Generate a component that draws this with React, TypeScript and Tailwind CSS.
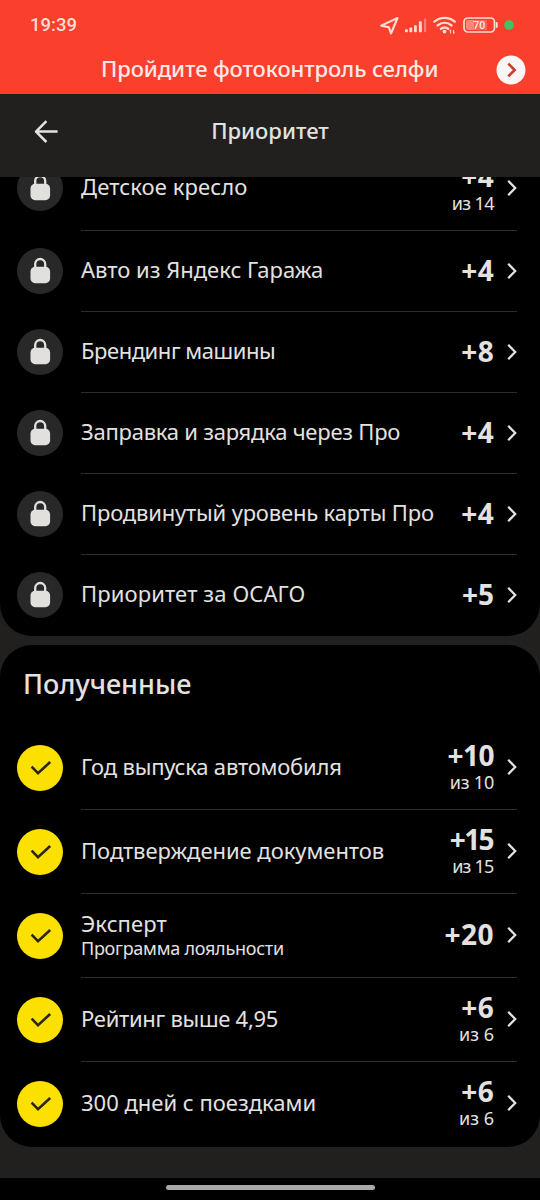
import { clsx } from "clsx";

type Item = {
  title: string;
  titleClass?: string;
  note?: string;
  score: string;
  scoreClass?: string;
  outOf?: string;
  outOfClass?: string;
};

const LOCKED: Item[] = [
  {
    title: "Детское кресло",
    titleClass: "tracking-[0.1px]",
    score: "+4",
    scoreClass: "tracking-[0.3px]",
    outOf: "из 14",
    outOfClass: "tracking-[-0.6px]",
  },
  { title: "Авто из Яндекс Гаража", score: "+4", scoreClass: "tracking-[0.3px]" },
  {
    title: "Брендинг машины",
    titleClass: "tracking-[-0.45px]",
    score: "+8",
    scoreClass: "tracking-[0.3px]",
  },
  {
    title: "Заправка и зарядка через Про",
    titleClass: "tracking-[-0.24px]",
    score: "+4",
    scoreClass: "tracking-[0.3px]",
  },
  {
    title: "Продвинутый уровень карты Про",
    titleClass: "tracking-[-0.18px]",
    score: "+4",
    scoreClass: "tracking-[0.3px]",
  },
  { title: "Приоритет за ОСАГО", titleClass: "tracking-[0.12px]", score: "+5" },
];

const RECEIVED: Item[] = [
  {
    title: "Год выпуска автомобиля",
    titleClass: "tracking-[-0.2px]",
    score: "+10",
    scoreClass: "tracking-[-0.5px]",
    outOf: "из 10",
    outOfClass: "tracking-[-0.2px]",
  },
  {
    title: "Подтверждение документов",
    titleClass: "tracking-[-0.04px]",
    score: "+15",
    scoreClass: "tracking-[-1.6px] mr-[1px]",
    outOf: "из 15",
    outOfClass: "tracking-[-0.8px] mr-[0.6px]",
  },
  {
    title: "Эксперт",
    titleClass: "tracking-[0.1px]",
    note: "Программа лояльности",
    score: "+20",
    scoreClass: "tracking-[0.5px]",
  },
  {
    title: "Рейтинг выше 4,95",
    titleClass: "tracking-[-0.28px]",
    score: "+6",
    scoreClass: "tracking-[0.3px]",
    outOf: "из 6",
  },
  {
    title: "300 дней с поездками",
    score: "+6",
    scoreClass: "tracking-[0.3px]",
    outOf: "из 6",
  },
];

function StatusIcons() {
  return (
    <svg width="136" height="24" viewBox="378 13 136 24" fill="none">
      {/* Location arrow */}
      <path
        d="M397.5 18 381.2 25.6l7.6 1.6 2.2 6.3L397.5 18Z"
        stroke="#ffdcd6"
        strokeWidth="2.1"
        strokeLinejoin="round"
      />
      {/* Signal bars */}
      <g fill="#ffdcd6">
        <rect x="405" y="29.3" width="2.8" height="3" rx="0.8" />
        <rect x="409.4" y="27.5" width="2.8" height="4.8" rx="0.8" />
        <rect x="414" y="25.2" width="2.8" height="7.1" rx="0.8" />
        <rect x="418.9" y="21.3" width="2.9" height="11" rx="0.8" />
        <rect x="424" y="18.5" width="2.2" height="13.8" rx="0.8" opacity="0.4" />
      </g>
      {/* Wi-Fi */}
      <g stroke="#ffdcd6" strokeWidth="2.4" strokeLinecap="round">
        <path d="M434.4 21.6c6.2-5 14.2-5 20.4 0" />
        <path d="M437.7 25.4c4.2-3.4 9.6-3.4 13.8 0" />
        <path d="M441 28.8c2.3-1.8 4.9-1.8 7.2 0" />
      </g>
      <circle cx="444.5" cy="31.6" r="1.9" fill="#ffdcd6" />
      <path d="M450.6 33.5v-3.6m-1 1.2 1-1.2M453.6 30v3.6m1-1.2-1 1.2" stroke="#ffdcd6" strokeWidth="1" />
      {/* Battery */}
      <rect x="464" y="18" width="30.5" height="14" rx="4" stroke="#ffdcd6" strokeWidth="1.7" />
      <path d="M468 20h6v10h-6a2 2 0 0 1-2-2v-6a2 2 0 0 1 2-2Z" fill="#ff8577" />
      <path d="M474 20h13v10h-13z" fill="#fb6354" />
      <path d="M496.8 23v4" stroke="#ffdcd6" strokeWidth="1.8" strokeLinecap="round" />
      <text
        x="479.3"
        y="29"
        textAnchor="middle"
        fill="#ffe9e6"
        fontSize="10.5"
        fontWeight="500"
        fontFamily="Roboto, sans-serif"
      >
        70
      </text>
      <circle cx="509" cy="25" r="4.8" fill="#40c463" />
    </svg>
  );
}

function LockBadge() {
  return (
    <svg width="46" height="46" viewBox="0 0 46 46" fill="none" className="shrink-0">
      <circle cx="23" cy="23" r="23" fill="#282828" />
      <path d="M18.2 20v-4a5 5 0 0 1 10 0v4" stroke="#e2e0dd" strokeWidth="2.3" />
      <rect x="13.5" y="18.8" width="19.6" height="16.4" rx="4.6" fill="#e2e0dd" />
    </svg>
  );
}

function CheckBadge() {
  return (
    <svg width="46" height="46" viewBox="0 0 46 46" fill="none" className="shrink-0">
      <circle cx="23" cy="23" r="23" fill="#fce000" />
      <path d="m14.6 21.6 6.4 6.6 12.2-11.2" stroke="#2b2811" strokeWidth="2.6" />
    </svg>
  );
}

function Chevron() {
  return (
    <svg width="10" height="18" viewBox="0 0 10 18" fill="none" className="shrink-0">
      <path d="m1.2 1.8 7 7.2-7 7.2" stroke="#e4e2e0" strokeWidth="2.3" />
    </svg>
  );
}

function Row({ item, locked, last }: { item: Item; locked?: boolean; last: boolean }) {
  // rows with a second line of text are a bit taller
  const tall = Boolean(item.outOf || item.note);

  return (
    <button
      type="button"
      className={clsx(
        "flex w-full shrink-0 items-center gap-[18px] pl-[17px] pr-[23px] text-left",
        tall ? "h-[84.1px]" : "h-[81.1px]",
      )}
    >
      {locked ? <LockBadge /> : <CheckBadge />}
      <div
        className={clsx(
          "flex h-full min-w-0 flex-1 items-center border-b",
          last ? "border-transparent" : "border-[#2d2d2d]",
        )}
      >
        <div className={clsx("flex-1 whitespace-nowrap", item.note ? "pt-px" : "pb-[2px]")}>
          <div className={clsx("text-[22px]", item.note ? "leading-[26px]" : "leading-[27px]", item.titleClass)}>
            {item.title}
          </div>
          {item.note && (
            <div className="text-[18px] leading-[25px] tracking-[-0.26px]">{item.note}</div>
          )}
        </div>
        <div className={clsx("mr-[13px] whitespace-nowrap text-right", !item.outOf && "pb-[2px]")}>
          <div className={clsx("text-[28px] font-bold leading-[30px]", item.scoreClass)}>
            {item.score}
          </div>
          {item.outOf && (
            <div className={clsx("text-[18px] leading-[24px]", item.outOfClass)}>{item.outOf}</div>
          )}
        </div>
        <Chevron />
      </div>
    </button>
  );
}

export default function App() {
  return (
    <div className="flex h-[1200px] w-[540px] flex-col overflow-hidden bg-[#21201f] font-['Noto_Sans','Open_Sans',sans-serif] text-[#e4e2e0]">
      <div className="h-[94px] shrink-0 border-b border-[#d9503f] bg-[#fb3f2d]">
        <div className="flex h-[50px] items-center justify-between pl-[30px] pr-[26px]">
          <span className="pt-[2px] font-[Roboto,sans-serif] text-[18.5px] font-medium text-[#ffdcd6]">
            19:39
          </span>
          <StatusIcons />
        </div>
        <div className="flex h-[40px] items-center pl-[101px] pr-[14px]">
          <span className="flex-1 whitespace-nowrap pb-[3px] text-[22px] font-medium tracking-[-0.12px] text-[#ffe9e6]">
            Пройдите фотоконтроль селфи
          </span>
          <svg width="30" height="30" viewBox="0 0 30 30" fill="none">
            <circle cx="15" cy="15" r="14.5" fill="#fbf6f5" />
            <path d="m12.3 8.6 6.4 6.4-6.4 6.4" stroke="#c8402f" strokeWidth="2.6" />
          </svg>
        </div>
      </div>

      <header className="grid h-[83px] shrink-0 grid-cols-[80px_1fr_80px] items-center pb-[10px]">
        <svg width="24" height="24" viewBox="0 0 24 24" fill="none" className="ml-[34px]">
          <path
            d="M23.6 12.6H2M12.4 2.2 2 12.6 12.4 23"
            stroke="#e4e2e0"
            strokeWidth="2.5"
            strokeLinejoin="round"
          />
        </svg>
        <h1 className="text-center text-[22px] font-medium">Приоритет</h1>
      </header>

      <main className="flex flex-1 flex-col gap-[8.5px] overflow-hidden">
        <section className="flex h-[459px] shrink-0 flex-col justify-end overflow-hidden rounded-b-[32px] bg-black">
          {LOCKED.map((item, i) => (
            <Row key={item.title} item={item} locked last={i === LOCKED.length - 1} />
          ))}
        </section>
        <section className="h-[502px] shrink-0 rounded-[32px] bg-black">
          <h2 className="flex h-[81px] items-center pb-[1px] pl-[23px] text-[27px] font-medium">
            Полученные
          </h2>
          {RECEIVED.map((item, i) => (
            <Row key={item.title} item={item} last={i === RECEIVED.length - 1} />
          ))}
        </section>
      </main>

      <div className="flex h-[22px] shrink-0 justify-center bg-black pt-[6.5px]">
        <div className="h-[5px] w-[209px] rounded-full bg-[#a9a9a9]" />
      </div>
    </div>
  );
}
